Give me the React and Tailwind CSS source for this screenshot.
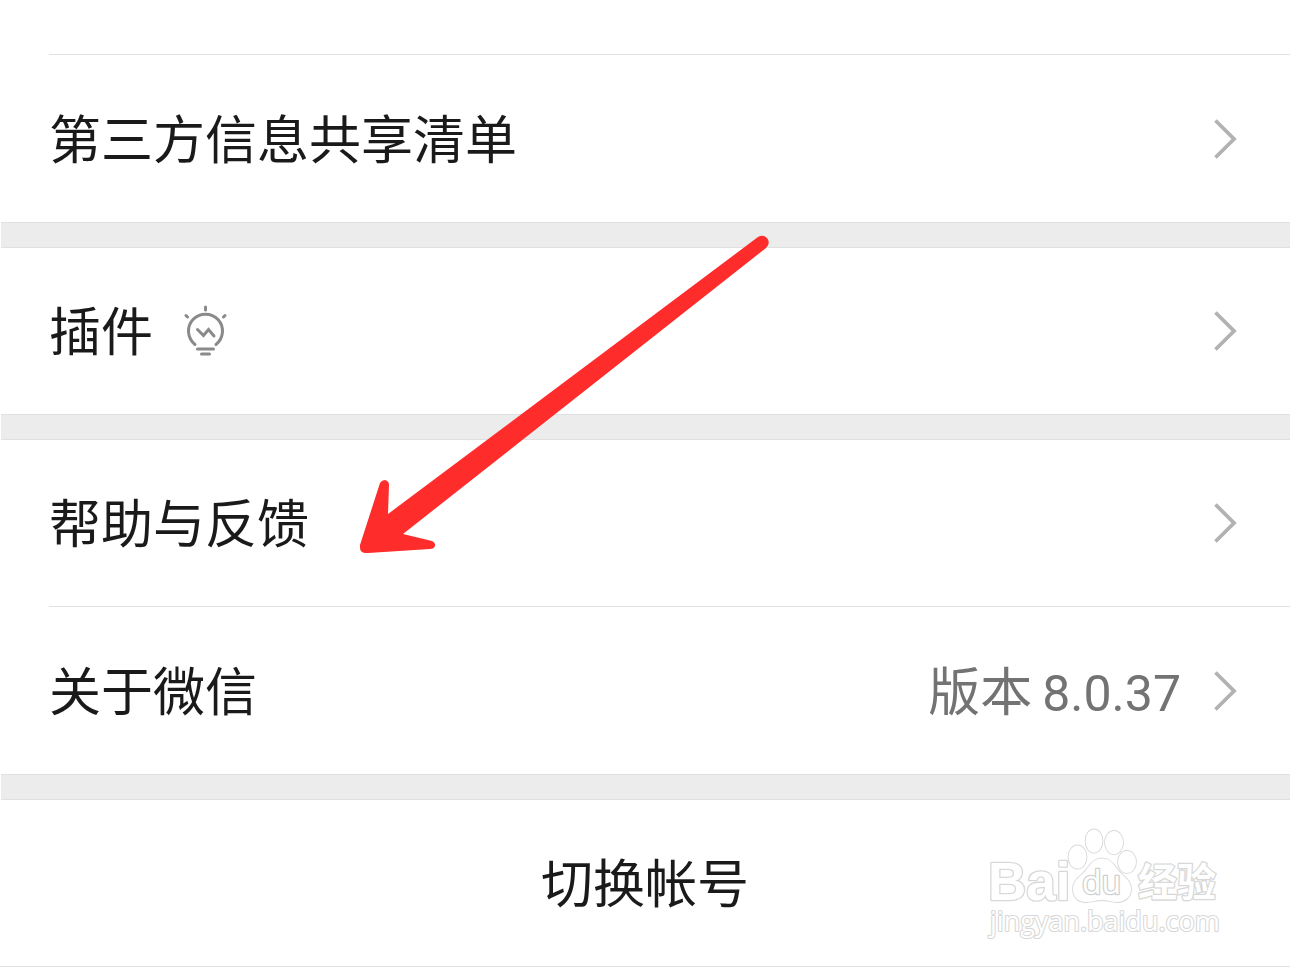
function Chevron() {
  return (
    <svg className="h-10 w-6 shrink-0" viewBox="0 0 24 40" fill="none" stroke="#b2b2b2" strokeWidth="3.8" aria-hidden="true">
      <path d="M2.5 1.5 21 20 2.5 38.5" />
    </svg>
  );
}

function Bulb() {
  return (
    <svg className="h-[52px] w-11 shrink-0" viewBox="0 0 44 52" fill="none" stroke="#8a8a8a" strokeWidth="3" strokeLinecap="round" strokeLinejoin="round" aria-hidden="true">
      <path d="M12 39.5A17 17 0 1 1 33 39.5" />
      <path d="M14.5 24.500 20.500 30.500 25.500 24.500 31 31" strokeLinejoin="miter" />
      <path d="M14.500 44H30.500M18.500 49H26.500M22.500 2V5M3 10.500 4.500 12M42 10.500 40.500 12" />
    </svg>
  );
}

function Row({ label, icon, children, divided }) {
  return (
    <li className={divided ? "ml-[49px] border-t border-[#e2e2e2] pt-px" : "ml-[49px]"}>
      <a href="#" className="flex min-h-[166px] items-center justify-between pr-[53px]">
        <span className="flex items-center gap-[30px]">
          <span className="pt-1.5">{label}</span>
          {icon}
        </span>
        <span className="flex items-center gap-8">
          {children}
          <Chevron />
        </span>
      </a>
    </li>
  );
}

function Band() {
  return <div className="ml-px h-[26px] border-y border-[#e0e0e0] bg-[#ececec]" />;
}

function Arrow() {
  return (
    <svg className="pointer-events-none absolute left-[358px] top-[234px] h-[322px] w-[412px]" viewBox="358 234 412 322" aria-hidden="true">
      <path
        d="M380 483Q382 480 385 480Q389 481 389 485L388 514L758 237Q763 234 767 238Q771 243 766 248L403 534L432 541Q436 543 435 546Q434 549 430 549L368 553Q359 554 360 545Z"
        fill="#fe2c2a"
      />
    </svg>
  );
}

function Watermark() {
  return (
    <svg className="pointer-events-none absolute bottom-6 right-[66px] h-[116px] w-[240px]" viewBox="984 826 240 116" fill="#fff" stroke="#d8d8d8" strokeWidth="1.800" strokeLinejoin="round" role="img" aria-label="Baidu 经验">
      <g className="font-['Open_Sans','Noto_Sans_CJK_SC',sans-serif]" style={{ paintOrder: "stroke" }}>
        <text x="988" y="900" fontSize="53" fontWeight="700" strokeWidth="2.600" className="font-['Liberation_Sans',sans-serif]">Bai</text>
        <ellipse cx="1077.500" cy="857" rx="9" ry="11.500" />
        <ellipse cx="1094" cy="841" rx="8.500" ry="11.500" />
        <ellipse cx="1114" cy="842.500" rx="9" ry="11.500" />
        <ellipse cx="1127" cy="862" rx="9" ry="11" />
        <path d="M1102 858.500C1109 858.500 1113 863 1117 869C1122 876 1131 879 1131 889C1131 897 1125 902 1117 902C1111 902 1107 900 1102 900C1097 900 1092 902 1086 902C1078 902 1073 897 1073 889C1073 879 1082 876 1087 869C1091 863 1095 858.500 1102 858.500Z" />
        <text x="1082" y="894" fontSize="32" fontWeight="500" stroke="#d0d0d0" strokeWidth="2.600">du</text>
        <text x="1138" y="896" fontSize="39" fontWeight="700" strokeWidth="2.600">经验</text>
        <text x="990" y="931" fontSize="27" fontWeight="400" strokeWidth="2.200">jingyan.baidu.com</text>
      </g>
    </svg>
  );
}

export default function App() {
  return (
    <main className="relative min-h-screen overflow-hidden bg-white pt-[54px] font-[Roboto,'Noto_Sans_CJK_SC',sans-serif] text-[52px] leading-[76px] text-[#1a1a1a]">
      <ul>
        <Row label="第三方信息共享清单" divided />
      </ul>
      <Band />
      <ul>
        <Row label="插件" icon={<Bulb />} />
      </ul>
      <Band />
      <ul>
        <Row label="帮助与反馈" />
        <Row label="关于微信" divided>
          <span className="flex items-baseline gap-[10px] pt-1.5 text-[#737373]">
            <span>版本</span>
            <span className="text-[50px]">8.0.37</span>
          </span>
        </Row>
      </ul>
      <Band />
      <div className="relative border-b border-[#e0e0e0]">
        <button type="button" className="block min-h-[166px] w-full pt-1.5 text-center">
          切换帐号
        </button>
        <Watermark />
      </div>
      <Arrow />
    </main>
  );
}
